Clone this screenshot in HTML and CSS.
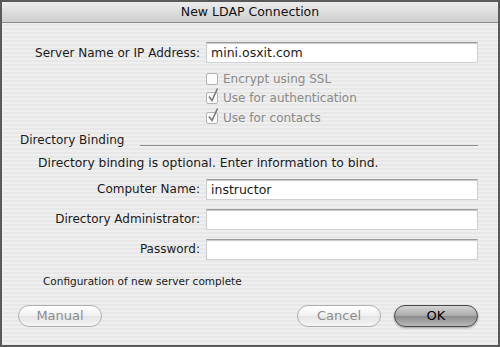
FILE: index.html
```html
<!DOCTYPE html>
<html lang="en">
<head>
    <meta charset="UTF-8">
    <title>New LDAP Connection</title>
    <link rel="stylesheet" href="styles.css">
</head>
<body>
    <div class="window">
        <div class="titlebar">New LDAP Connection</div>
        <div class="content">
            <div class="field-row server-row">
                <label>Server Name or IP Address:</label>
                <div class="input">mini.osxit.com</div>
            </div>
            <div class="checks">
                <div class="check"><span class="box"></span>Encrypt using SSL</div>
                <div class="check"><span class="box"><svg viewBox="0 0 12 16" width="12" height="16"><path d="M2 9.5 L5 13.5 L10.5 1.5" fill="none" stroke="#7a7a7a" stroke-width="1.6"/></svg></span>Use for authentication</div>
                <div class="check"><span class="box"><svg viewBox="0 0 12 16" width="12" height="16"><path d="M2 9.5 L5 13.5 L10.5 1.5" fill="none" stroke="#7a7a7a" stroke-width="1.6"/></svg></span>Use for contacts</div>
            </div>
            <div class="section-head">
                <span>Directory Binding</span>
                <span class="rule"></span>
            </div>
            <p class="info">Directory binding is optional. Enter information to bind.</p>
            <div class="field-row bind-row">
                <label>Computer Name:</label>
                <div class="input">instructor</div>
            </div>
            <div class="field-row bind-row">
                <label>Directory Administrator:</label>
                <div class="input"></div>
            </div>
            <div class="field-row bind-row">
                <label>Password:</label>
                <div class="input"></div>
            </div>
            <p class="status">Configuration of new server complete</p>
            <div class="buttons">
                <button class="btn disabled">Manual</button>
                <span class="spacer"></span>
                <button class="btn disabled">Cancel</button>
                <button class="btn default">OK</button>
            </div>
        </div>
    </div>
</body>
</html>
```

FILE: styles.css
```css
body { margin: 0; font-family: "DejaVu Sans", "Liberation Sans", sans-serif; font-size: 12px; color: #1a1a1a; }
.window { width: 500px; height: 347px; box-sizing: border-box; border: 2px solid #5a5a5a; background: repeating-linear-gradient(to bottom, #efefef 0, #efefef 2px, #e7e7e7 2px, #e7e7e7 4px); display: flex; flex-direction: column; }
.titlebar { height: 20px; line-height: 20px; text-align: center; font-size: 12.5px; color: #111; background: linear-gradient(to bottom, #ececec, #cfcfcf); border-bottom: 1px solid #8a8a8a; border-radius: 5px 5px 0 0; }
.content { padding: 19px 20px 0 18px; flex: 1; display: flex; flex-direction: column; }
.field-row { display: flex; align-items: center; height: 21px; }
.field-row label { width: 180px; text-align: right; padding-right: 6px; }
.input { flex: 1; height: 21px; box-sizing: border-box; background: #fff; border: 1px solid #d0d0d0; border-top-color: #9a9a9a; box-shadow: inset 0 1px 1px #c8c8c8; padding: 2px 4px; line-height: 16px; font-size: 12.5px; }
.checks { margin: 6px 0 0 186px; color: #8a8a8a; }
.check { display: flex; align-items: center; height: 19.5px; }
.box { width: 10px; height: 10px; border: 1px solid #b4b4b4; background: #fafafa; border-radius: 2px; margin-right: 5px; position: relative; }
.box svg { position: absolute; left: 0; top: -6px; }
.section-head { display: flex; align-items: center; margin-top: 5px; }
.section-head .rule { flex: 1; height: 1px; background: #8e8e8e; margin: 12px 0 0 16px; }
.info { margin: 9px 0 0 18px; font-size: 12.3px; }
.bind-row { margin-top: 9px; }
.bind-row + .bind-row { margin-top: 9px; }
.status { margin: 15px 0 0 23px; font-size: 10.5px; }
.buttons { display: flex; margin: 18px 0 0 -2px; }
.spacer { flex: 1; }
.btn { width: 84px; height: 22px; border-radius: 11px; font-family: inherit; font-size: 13px; padding: 0; }
.btn + .btn { margin-left: 13px; }
.btn.disabled { color: #8c8c8c; border: 1px solid #b0b0b0; background: linear-gradient(to bottom, #ffffff, #f0f0f0 50%, #e4e4e4 51%, #f6f6f6); }
.btn.default { color: #000; border: 1px solid #4a4a4a; background: linear-gradient(to bottom, #d4d4d4, #a8a8a8 50%, #8c8c8c 51%, #b8b8b8); box-shadow: 0 1px 2px rgba(0,0,0,0.35); }
```
